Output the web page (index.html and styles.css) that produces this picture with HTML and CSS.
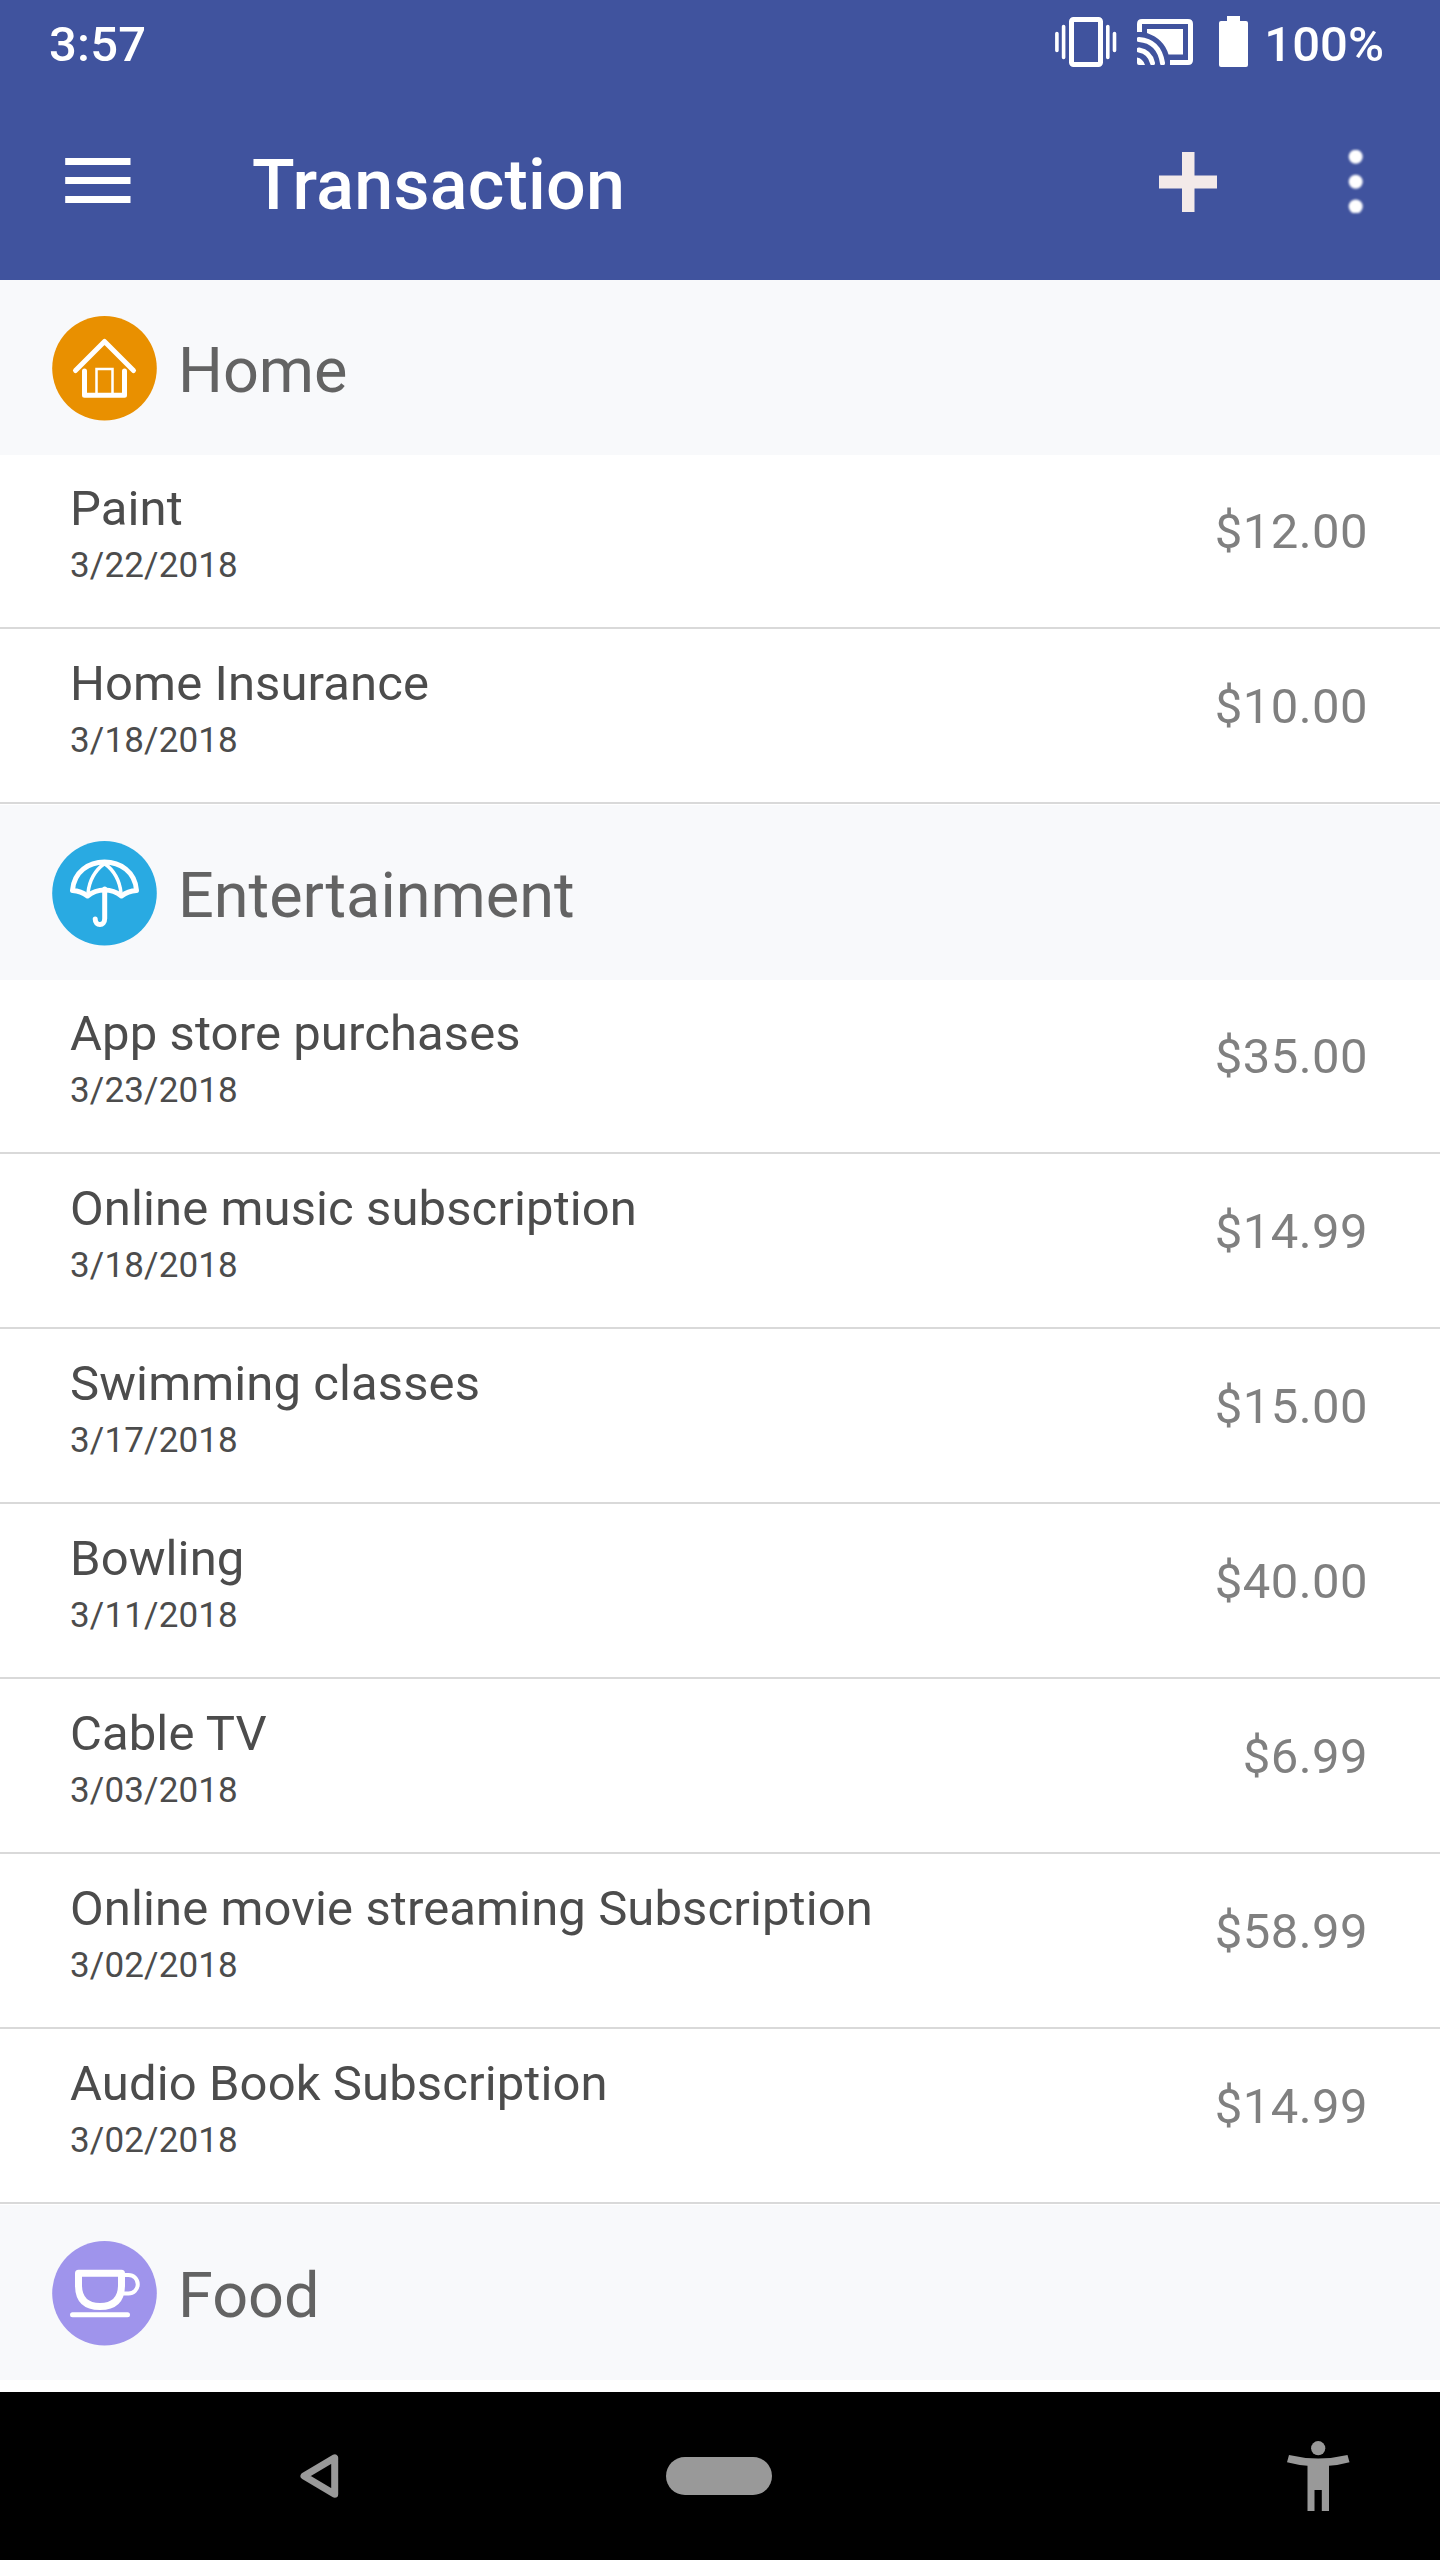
FILE: index.html
```html
<!DOCTYPE html>
<html lang="en">
<head>
<meta charset="utf-8">
<title>Transaction</title>
<link rel="stylesheet" href="styles.css">
</head>
<body>
<header class="header">
  <div class="status">
    <span class="clock">3:57</span>
    <div class="status-icons">
      <svg class="vibrate" viewBox="0 0 62 52" width="62" height="52">
        <path d="M18.500 3.500h25a2 2 0 0 1 2 2v41a2 2 0 0 1-2 2h-25a2 2 0 0 1-2-2v-41a2 2 0 0 1 2-2z" fill="none" stroke="#fff" stroke-width="5"/>
        <path d="M1.900 17.500v17M8.600 10.500v31M52.800 10.500v31M59.500 17.500v17" stroke="#fff" stroke-width="3.600" stroke-linecap="round"/>
      </svg>
      <svg class="cast" viewBox="0 0 56 46" width="56" height="46">
        <path d="M0 13V5q0-5 5-5h46q5 0 5 5v36q0 5-5 5H33v-5h18V5H5v8z" fill="#fff"/>
        <path d="M10 10h36v25.500H31.500Q27 20 10 14zM0 38.500q6 1 8 7.500H2q-2 0-2-2z" fill="#fff"/>
        <path d="M2 31q11 2 13.500 13M2 20.500Q22 22 25.500 44" fill="none" stroke="#fff" stroke-width="5" stroke-linecap="round"/>
      </svg>
      <svg class="battery" viewBox="0 0 29 51" width="29" height="51"><path d="M8 0h13v5h6q2 0 2 2v42q0 2-2 2H2q-2 0-2-2V7q0-2 2-2h6z" fill="#fff"/></svg>
      <span>100%</span>
    </div>
  </div>
  <div class="toolbar">
    <svg class="menu" viewBox="0 0 66 45" width="66" height="45"><path d="M0.200 0H65.500v7H0.200zM0.200 19H65.500v7H0.200zM0.200 38H65.500v7H0.200z" fill="#fff"/></svg>
    <h1 class="title">Transaction</h1>
    <svg class="plus" viewBox="0 0 58 60" width="58" height="60"><path d="M23 0h12.500v23.500H58v13H35.500V60H23V36.500H0v-13h23z" fill="#f3eae9"/></svg>
    <svg class="more" viewBox="0 0 16 63" width="16" height="63"><g fill="#fff"><circle cx="7.700" cy="6.700" r="7"/><circle cx="7.700" cy="31.700" r="7"/><circle cx="7.700" cy="56.500" r="7"/></g></svg>
  </div>
</header>
<main class="list">
  <h2 class="section">
    <svg viewBox="0 0 105 105" width="105" height="105">
      <circle cx="52.500" cy="52.300" r="52.300" fill="#e99000"/>
      <g fill="none" stroke="#fff"><path d="M23.500 54.500 52.500 25.500l29 29M32.500 55v24.300h40V55" stroke-width="5" stroke-linecap="round" stroke-linejoin="round"/><path d="M44.500 79V53H60.500v26" stroke-width="2.500"/></g>
    </svg>
    <span>Home</span>
  </h2>
  <div class="row"><div class="info"><span class="name">Paint</span><span class="date">3/22/2018</span></div><span class="amount">$12.00</span></div>
  <div class="row"><div class="info"><span class="name">Home Insurance</span><span class="date">3/18/2018</span></div><span class="amount">$10.00</span></div>
  <h2 class="section">
    <svg viewBox="0 0 105 105" width="105" height="105">
      <circle cx="52.500" cy="52.300" r="52.300" fill="#29aae2"/>
      <path d="M20.500 49.500C23 11.500 82 11.500 84.500 49.500Q76 50 69.500 55 62 49 52.500 49T35.500 55Q29 50 20.500 49.500z" fill="none" stroke="#fff" stroke-width="5" stroke-linejoin="round"/>
      <path d="M36 52Q38 33 52.500 22.500 67 33 69 52" fill="none" stroke="#fff" stroke-width="3.500"/>
      <path d="M52.700 48v29.500c0 8-9.500 8-9.500 0.500" fill="none" stroke="#fff" stroke-width="5" stroke-linecap="round"/>
    </svg>
    <span>Entertainment</span>
  </h2>
  <div class="row"><div class="info"><span class="name">App store purchases</span><span class="date">3/23/2018</span></div><span class="amount">$35.00</span></div>
  <div class="row"><div class="info"><span class="name">Online music subscription</span><span class="date">3/18/2018</span></div><span class="amount">$14.99</span></div>
  <div class="row"><div class="info"><span class="name">Swimming classes</span><span class="date">3/17/2018</span></div><span class="amount">$15.00</span></div>
  <div class="row"><div class="info"><span class="name">Bowling</span><span class="date">3/11/2018</span></div><span class="amount">$40.00</span></div>
  <div class="row"><div class="info"><span class="name">Cable TV</span><span class="date">3/03/2018</span></div><span class="amount">$6.99</span></div>
  <div class="row"><div class="info"><span class="name">Online movie streaming Subscription</span><span class="date">3/02/2018</span></div><span class="amount">$58.99</span></div>
  <div class="row"><div class="info"><span class="name">Audio Book Subscription</span><span class="date">3/02/2018</span></div><span class="amount">$14.99</span></div>
  <h2 class="section">
    <svg viewBox="0 0 105 105" width="105" height="105">
      <circle cx="52.500" cy="52.300" r="52.300" fill="#9f94ec"/>
      <g fill="none" stroke="#fff"><path d="M26.500 32.200H69.500V44q0 21.500-21.500 21.500T26.500 44z" stroke-width="7" stroke-linejoin="round"/><path d="M73 34h3.500a9 9 0 0 1 0 18.500H71" stroke-width="4"/><path d="M20.500 73.700h55" stroke-width="5" stroke-linecap="round"/></g>
    </svg>
    <span>Food</span>
  </h2>
</main>
<nav class="nav">
  <svg class="back" viewBox="0 0 39 44" width="39" height="44"><path d="M34.700 3.800v36.400L4 22z" fill="none" stroke="#999" stroke-width="7" stroke-linejoin="round"/></svg>
  <span class="pill"></span>
  <svg class="access" viewBox="0 0 63 71" width="63" height="71"><circle cx="31.200" cy="7.200" r="7.100" fill="#999"/><path d="M2 14Q31 21 60.500 14l2 7.200Q52 24 42 24.800V70h-7.200V49H27.500V70H20.500V24.800Q11 24 0 21.200z" fill="#999"/></svg>
</nav>
</body>
</html>
```
FILE: styles.css
```css
* { box-sizing: border-box; }
body {
  margin: 0;
  width: 1440px;
  height: 2560px;
  display: flex;
  flex-direction: column;
  background: #fff;
  font-family: Roboto, sans-serif;
}
svg { display: block; flex: none; }
.header { height: 280px; background: #40539e; color: #fff; }
.status {
  height: 84px;
  padding: 16px 56px 0 49px;
  display: flex;
  justify-content: space-between;
  align-items: flex-start;
  font-size: 49px;
  font-weight: 500;
  line-height: 58px;
}
.clock { letter-spacing: 0.2px; }
.status-icons { display: flex; }
.vibrate { margin-right: 20px; }
.cast { margin: 3px 26px 0 0; }
.battery { margin-right: 16px; }
.toolbar { height: 196px; padding: 0 76px 0 65px; display: flex; align-items: flex-start; }
.menu { margin-top: 74px; }
.title {
  margin: 60px auto 0 121px;
  font-size: 70px;
  line-height: 82px;
  font-weight: 500;
  letter-spacing: 0.25px;
}
.plus { margin: 68px 131px 0 0; }
.more { margin-top: 66px; filter: blur(0.8px); }
.list { height: 2112px; }
.section {
  margin: 0;
  height: 175px;
  padding: 0 52px;
  display: flex;
  align-items: flex-start;
  gap: 21px;
  background: #f8f9fb;
  color: #636363;
  font-size: 63px;
  line-height: 74px;
  font-weight: 400;
}
.section svg { margin-top: 36px; }
.section span { margin-top: 54px; }
.row {
  height: 174px;
  margin-bottom: 1px;
  padding: 0 72px 0 70px;
  display: flex;
  justify-content: space-between;
  border-bottom: 2px solid #d9d9d9;
}
.info { display: flex; flex-direction: column; padding-top: 25px; color: #4c4c4c; }
.name { font-size: 49px; line-height: 58px; letter-spacing: 0.1px; }
.date { margin-top: 7px; font-size: 35px; line-height: 42px; letter-spacing: 0.15px; }
.amount { margin-top: 48px; color: #808080; font-size: 49px; line-height: 58px; letter-spacing: 0.45px; }
.nav { height: 168px; background: #000; display: flex; align-items: flex-start; padding-left: 300px; }
.back { margin-top: 62px; }
.pill { width: 106px; height: 38px; margin: 65px 515px 0 327px; border-radius: 19px; background: #999; }
.access { margin-top: 49px; }
```
